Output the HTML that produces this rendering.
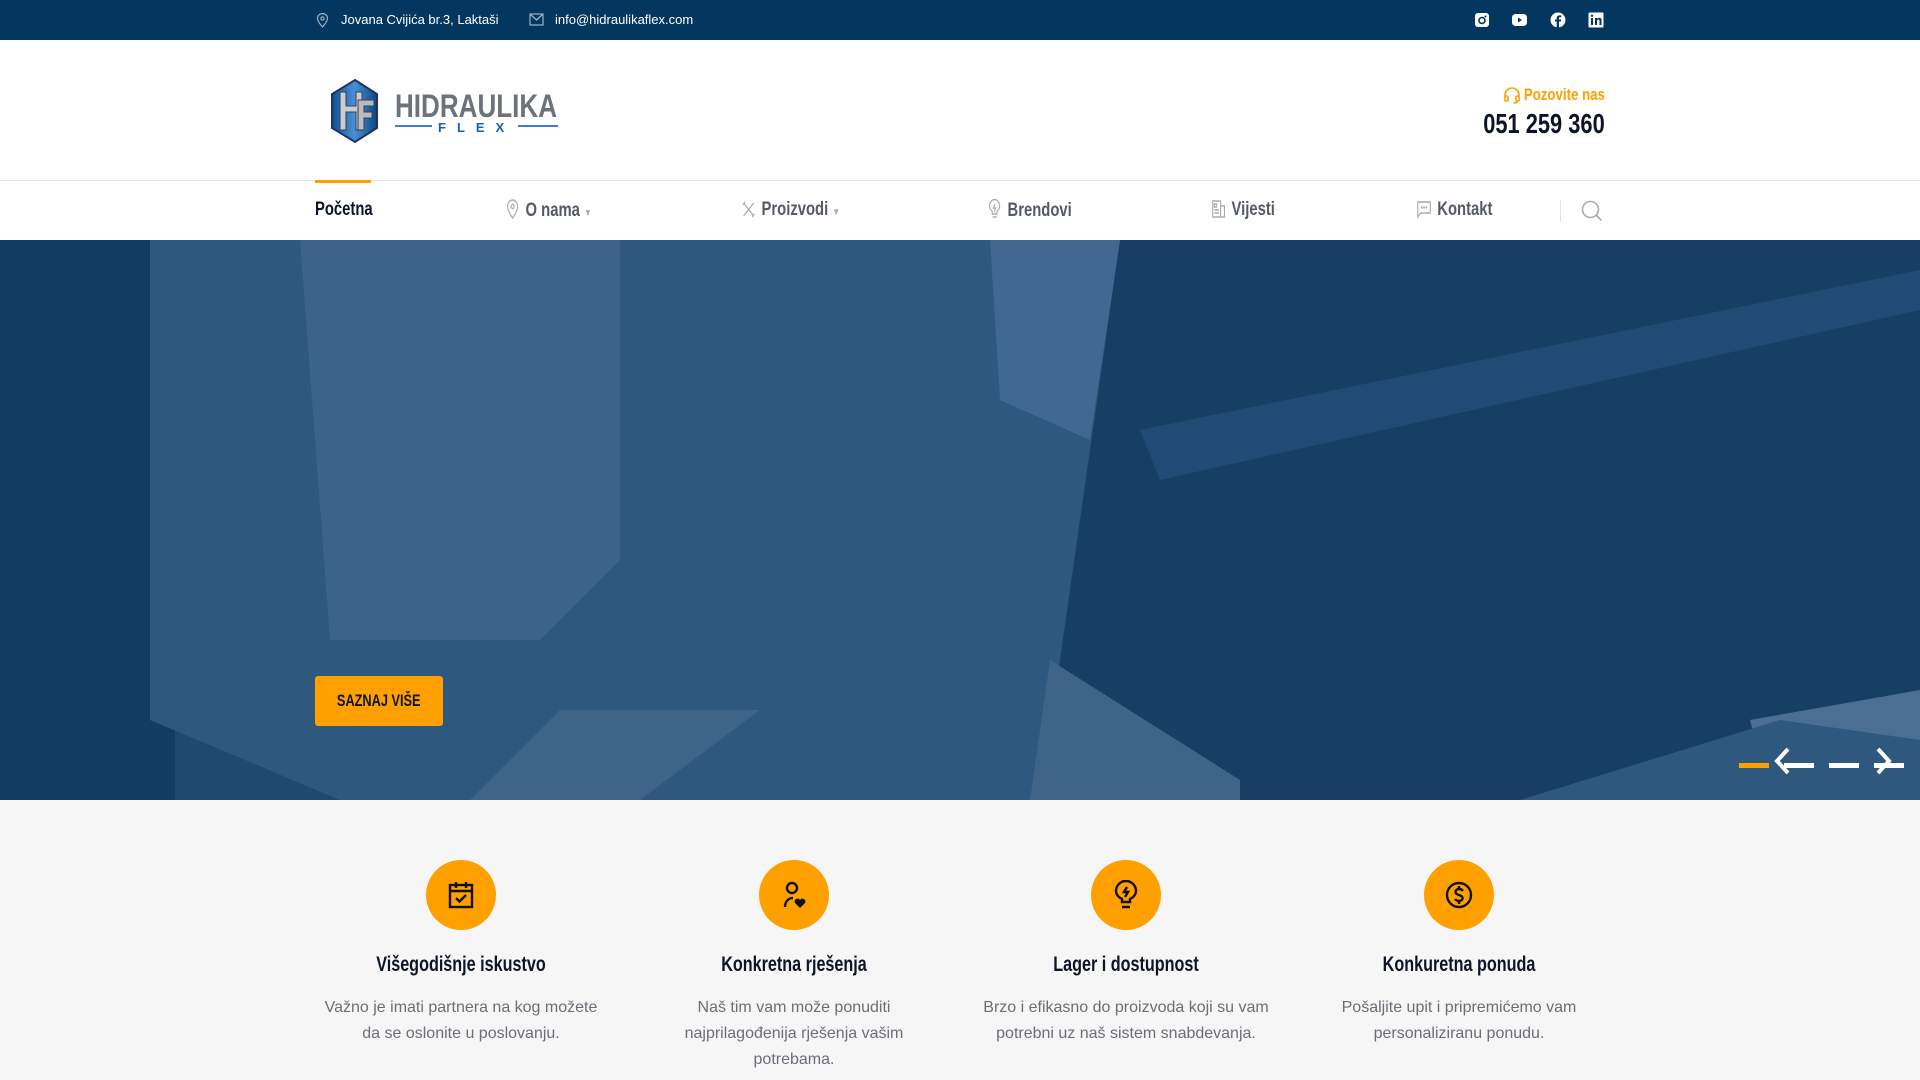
<!DOCTYPE html>
<html><head><meta charset="utf-8"><style>
*{margin:0;padding:0;box-sizing:border-box}
body{width:1920px;height:1080px;overflow:hidden;background:#f6f6f6;font-family:"Liberation Sans",sans-serif;position:relative}
.abs{position:absolute}
.cond{font-weight:bold;display:inline-block;transform:scaleX(.78);transform-origin:left center;white-space:nowrap}
.condr{font-weight:bold;transform:scaleX(.78);transform-origin:right center;white-space:nowrap;text-align:right}
#top{left:0;top:0;width:1920px;height:40px;background:#03375f;color:#fff;font-size:13px}
#hdr{left:0;top:40px;width:1920px;height:200px;background:#fff}
.nav{top:199px;font-size:19px;color:#555a66}
.nav svg{vertical-align:-3px;margin-right:8px}
.feat{position:absolute;top:860px;width:300px;text-align:center}
.circ{width:70px;height:70px;border-radius:50%;background:#ffa000;margin:0 auto;display:flex;align-items:center;justify-content:center}
.feat h3{font-size:21px;color:#0d1428;margin-top:22px;line-height:26px;transform:scaleX(.77);white-space:nowrap}
.feat p{font-size:16px;color:#6b6e77;line-height:26px;margin-top:17px}
</style></head><body>
<div id="top" class="abs">
 <svg class="abs" style="left:316px;top:13px" width="13" height="15" viewBox="0 0 13 15" fill="none" stroke="#9fb2c5" stroke-width="1.2"><path d="M6.5 14C3 10 1.5 7.5 1.5 5.5a5 5 0 0110 0c0 2-1.5 4.5-5 8.5z"/><circle cx="6.5" cy="5.5" r="1.6"/></svg>
 <span class="abs" style="left:341px;top:12px">Jovana Cvijića br.3, Laktaši</span>
 <svg class="abs" style="left:529px;top:13px" width="15" height="13" viewBox="0 0 15 13" fill="none" stroke="#9fb2c5" stroke-width="1.2"><rect x="1" y="1" width="13" height="11"/><path d="M1 1l6.5 6L14 1"/></svg>
 <span class="abs" style="left:555px;top:12px">info@hidraulikaflex.com</span>
 <svg class="abs" style="left:1474px;top:12px" width="16" height="16" viewBox="0 0 16 16"><rect x="1" y="1" width="14" height="14" rx="3" fill="#fff"/><circle cx="8" cy="8.5" r="3" fill="none" stroke="#03375f" stroke-width="1.6"/><circle cx="11.5" cy="4.5" r="1" fill="#03375f"/></svg>
 <svg class="abs" style="left:1511px;top:12px" width="17" height="16" viewBox="0 0 17 16"><rect x="1" y="2" width="15" height="12" rx="3.5" fill="#fff"/><path d="M7 5.5v5l4-2.5z" fill="#03375f"/></svg>
 <svg class="abs" style="left:1550px;top:12px" width="16" height="16" viewBox="0 0 16 16"><circle cx="8" cy="8" r="7.5" fill="#fff"/><path d="M9 16V9.5h2l.3-2H9V6.3c0-.6.2-1 1-1h1.3V3.5c-.3 0-1-.1-1.8-.1-1.8 0-2.8 1-2.8 2.8v1.3H5v2h1.7V16z" fill="#03375f"/></svg>
 <svg class="abs" style="left:1588px;top:12px" width="16" height="16" viewBox="0 0 16 16"><rect x="0.5" y="0.5" width="15" height="15" rx="1" fill="#fff"/><rect x="3" y="6" width="2" height="7" fill="#03375f"/><circle cx="4" cy="3.8" r="1.2" fill="#03375f"/><path d="M7 6h2v1c.5-.8 1.3-1.2 2.3-1.2 1.6 0 2.2 1 2.2 2.8V13h-2V9c0-1-.3-1.5-1.1-1.5S9 8 9 9v4H7z" fill="#03375f"/></svg>
</div>
<div id="hdr" class="abs">
 <svg class="abs" style="left:328px;top:38px" width="232" height="68" viewBox="0 0 232 68">
  <defs><linearGradient id="g" x1="0" x2="1"><stop offset="0" stop-color="#0e4f9a"/><stop offset=".5" stop-color="#4a8fd6"/><stop offset="1" stop-color="#0d4586"/></linearGradient></defs>
  <path d="M27 2L49 16V50L27 64L4 50V16Z" fill="url(#g)" stroke="#1d3558" stroke-width="2"/>
  <path d="M12 14h6v14h10V14h6v38h-6V34H18v18h-6z" fill="#c9ccd2" stroke="#3b4049"/>
  <path d="M30 22h16v6H36v6h8v6h-8v12h-6z" fill="#b7bcc4" stroke="#3b4049"/>
  <text x="67" y="39" font-family="Liberation Sans,sans-serif" font-weight="bold" font-size="32" fill="#6d727b" textLength="162" lengthAdjust="spacingAndGlyphs">HIDRAULIKA</text>
  <line x1="67" y1="48" x2="104" y2="48" stroke="#3a7fd0" stroke-width="2"/><line x1="190" y1="48" x2="230" y2="48" stroke="#3a7fd0" stroke-width="2"/>
  <text x="110" y="54" font-family="Liberation Sans,sans-serif" font-weight="bold" font-size="13" fill="#1660b8" letter-spacing="11">FLEX</text>
 </svg>
 <svg class="abs" style="left:1503px;top:46px" width="18" height="18" viewBox="0 0 18 18" fill="none" stroke="#ffa000" stroke-width="1.6"><path d="M2 11V9a7 7 0 0114 0v2"/><rect x="2" y="10" width="3" height="5" rx="1"/><rect x="13" y="10" width="3" height="5" rx="1"/><path d="M14.5 15c0 1.5-2 2-4 2"/></svg>
 <div class="abs condr" style="right:315px;top:45px;font-size:17px;color:#ffa000">Pozovite nas</div>
 <div class="abs condr" style="right:315px;top:68px;font-size:28px;color:#0d1428">051 259 360</div>
 <div class="abs" style="left:0;top:140px;width:1920px;height:1px;background:#e6e6e6"></div>
 <div class="abs" style="left:315px;top:140px;width:56px;height:3px;background:#ffa000"></div>
</div>
<div class="abs nav cond" style="left:315px;color:#0d1428">Početna</div>
<div class="abs nav cond" style="left:506px"><svg width="17" height="20" viewBox="0 0 17 20" fill="none" stroke="#aaa" stroke-width="1.4"><path d="M8.5 19C4 14 2 10.5 2 7.5a6.5 6.5 0 0113 0c0 3-2 6.5-6.5 11.5z"/><circle cx="8.5" cy="7.5" r="2"/></svg>O nama <span style="font-size:10px;color:#aaa">▼</span></div>
<div class="abs nav cond" style="left:742px"><svg width="17" height="17" viewBox="0 0 17 17" fill="none" stroke="#aaa" stroke-width="1.4"><path d="M2 15L15 2M2 2l13 13M1 4l3-3M13 16l3-3"/></svg>Proizvodi <span style="font-size:10px;color:#aaa">▼</span></div>
<div class="abs nav cond" style="left:988px"><svg width="17" height="20" viewBox="0 0 17 20" fill="none" stroke="#aaa" stroke-width="1.4"><path d="M5.5 15v-2.5C3.5 11 2 9 2 7a6.5 6.5 0 0113 0c0 2-1.5 4-3.5 5.5V15zM6 18h5M9 5l-2 4h3l-2 4"/></svg>Brendovi</div>
<div class="abs nav cond" style="left:1212px"><svg width="17" height="18" viewBox="0 0 17 18" fill="none" stroke="#aaa" stroke-width="1.4"><path d="M1 1h10v16H1zM11 6h5v11h-5M3 4h3v3H3zM3 10h6M3 13h6"/></svg>Vijesti</div>
<div class="abs nav cond" style="left:1417px"><svg width="18" height="17" viewBox="0 0 18 17" fill="none" stroke="#aaa" stroke-width="1.4"><path d="M1 1h16v11H5l-4 4z"/><circle cx="6" cy="6.5" r=".5"/><circle cx="9" cy="6.5" r=".5"/><circle cx="12" cy="6.5" r=".5"/></svg>Kontakt</div>
<div class="abs" style="left:1560px;top:200px;width:1px;height:22px;background:#e3e3e3"></div>
<svg class="abs" style="left:1581px;top:200px" width="22" height="22" viewBox="0 0 22 22" fill="none" stroke="#aaa" stroke-width="1.6"><circle cx="9.5" cy="9.5" r="8"/><path d="M15.5 15.5l5 5"/></svg>

<svg class="abs" style="left:0;top:240px" width="1920" height="560" viewBox="0 0 1920 560">
 <rect width="1920" height="560" fill="#1e4a70"/>
 <rect x="0" width="175" height="560" fill="#143d62"/>
 <path d="M150 0H1125L1095 560H340L150 480Z" fill="#2f587e"/>
 <path d="M1120 0H1920V560H1040Z" fill="#173f64"/>
 <path d="M300 0H620V320L540 400H330Z" fill="#3c6388"/>
 <path d="M990 0H1120L1090 200L1000 160Z" fill="#416891"/>
 <path d="M560 470H760L640 560H470Z" fill="#3e6588"/>
 <path d="M1050 420L1240 540V560H1030Z" fill="#3e6588"/>
 <path d="M1750 480L1920 450V560H1770Z" fill="#4a6f92"/>
 <path d="M1140 190L1920 30V70L1160 240Z" fill="#26507a" opacity=".7"/>
 <path d="M1520 560L1780 480L1920 500V560Z" fill="#2e587e"/>
</svg>
<div class="abs" style="left:315px;top:676px;width:128px;height:50px;background:#ffa000;border-radius:3px;text-align:center;line-height:50px"><span style="display:inline-block;transform:scaleX(.75);font-weight:bold;font-size:17px;color:#0d1428;white-space:nowrap">SAZNAJ VIŠE</span></div>
<div class="abs" style="left:1739px;top:763px;width:30px;height:5px;background:#ffa000"></div>
<div class="abs" style="left:1784px;top:763px;width:30px;height:5px;background:#fff"></div>
<div class="abs" style="left:1829px;top:763px;width:30px;height:5px;background:#fff"></div>
<div class="abs" style="left:1874px;top:763px;width:30px;height:5px;background:#fff"></div>
<svg class="abs" style="left:1772px;top:746px" width="20" height="30" viewBox="0 0 20 30" fill="none" stroke="#fff" stroke-width="4"><path d="M16 3L5 15l11 12"/></svg>
<svg class="abs" style="left:1874px;top:746px" width="20" height="30" viewBox="0 0 20 30" fill="none" stroke="#fff" stroke-width="4"><path d="M4 3l11 12L4 27"/></svg>

<div class="feat" style="left:311px"><div class="circ"><svg width="30" height="30" viewBox="0 0 30 30" fill="none" stroke="#111" stroke-width="2.4"><rect x="4" y="5" width="22" height="22"/><path d="M4 11h22M10 2v6M20 2v6M10 18l3.5 3.5L20 15"/></svg></div><h3>Višegodišnje iskustvo</h3><p>Važno je imati partnera na kog možete<br>da se oslonite u poslovanju.</p></div>
<div class="feat" style="left:644px"><div class="circ"><svg width="30" height="30" viewBox="0 0 30 30"><circle cx="13" cy="8" r="5" fill="none" stroke="#111" stroke-width="2.4"/><path d="M6 27c0-5 3-9 8-9" fill="none" stroke="#111" stroke-width="2.4"/><path d="M21 28l-5-5a2.6 2.6 0 015-3 2.6 2.6 0 015 3z" fill="#111"/></svg></div><h3>Konkretna rješenja</h3><p>Naš tim vam može ponuditi<br>najprilagođenija rješenja vašim<br>potrebama.</p></div>
<div class="feat" style="left:976px"><div class="circ"><svg width="30" height="30" viewBox="0 0 30 30" fill="none" stroke="#111" stroke-width="2.4"><path d="M11 22v-3C7 17 5 14 5 11a10 10 0 0120 0c0 3-2 6-6 8v3zM11 27h8M16 7l-3 5h4l-3 5"/></svg></div><h3>Lager i dostupnost</h3><p>Brzo i efikasno do proizvoda koji su vam<br>potrebni uz naš sistem snabdevanja.</p></div>
<div class="feat" style="left:1309px"><div class="circ"><svg width="30" height="30" viewBox="0 0 30 30" fill="none" stroke="#111" stroke-width="2.4"><circle cx="15" cy="15" r="12"/><path d="M19 11c-1-1.5-2.5-2-4-2-2 0-3.5 1-3.5 3s2 2.5 3.5 3 3.5 1 3.5 3-1.5 3-3.5 3c-1.5 0-3-.5-4-2M15 6v3M15 21v3"/></svg></div><h3>Konkuretna ponuda</h3><p>Pošaljite upit i pripremićemo vam<br>personaliziranu ponudu.</p></div>
</body></html>
